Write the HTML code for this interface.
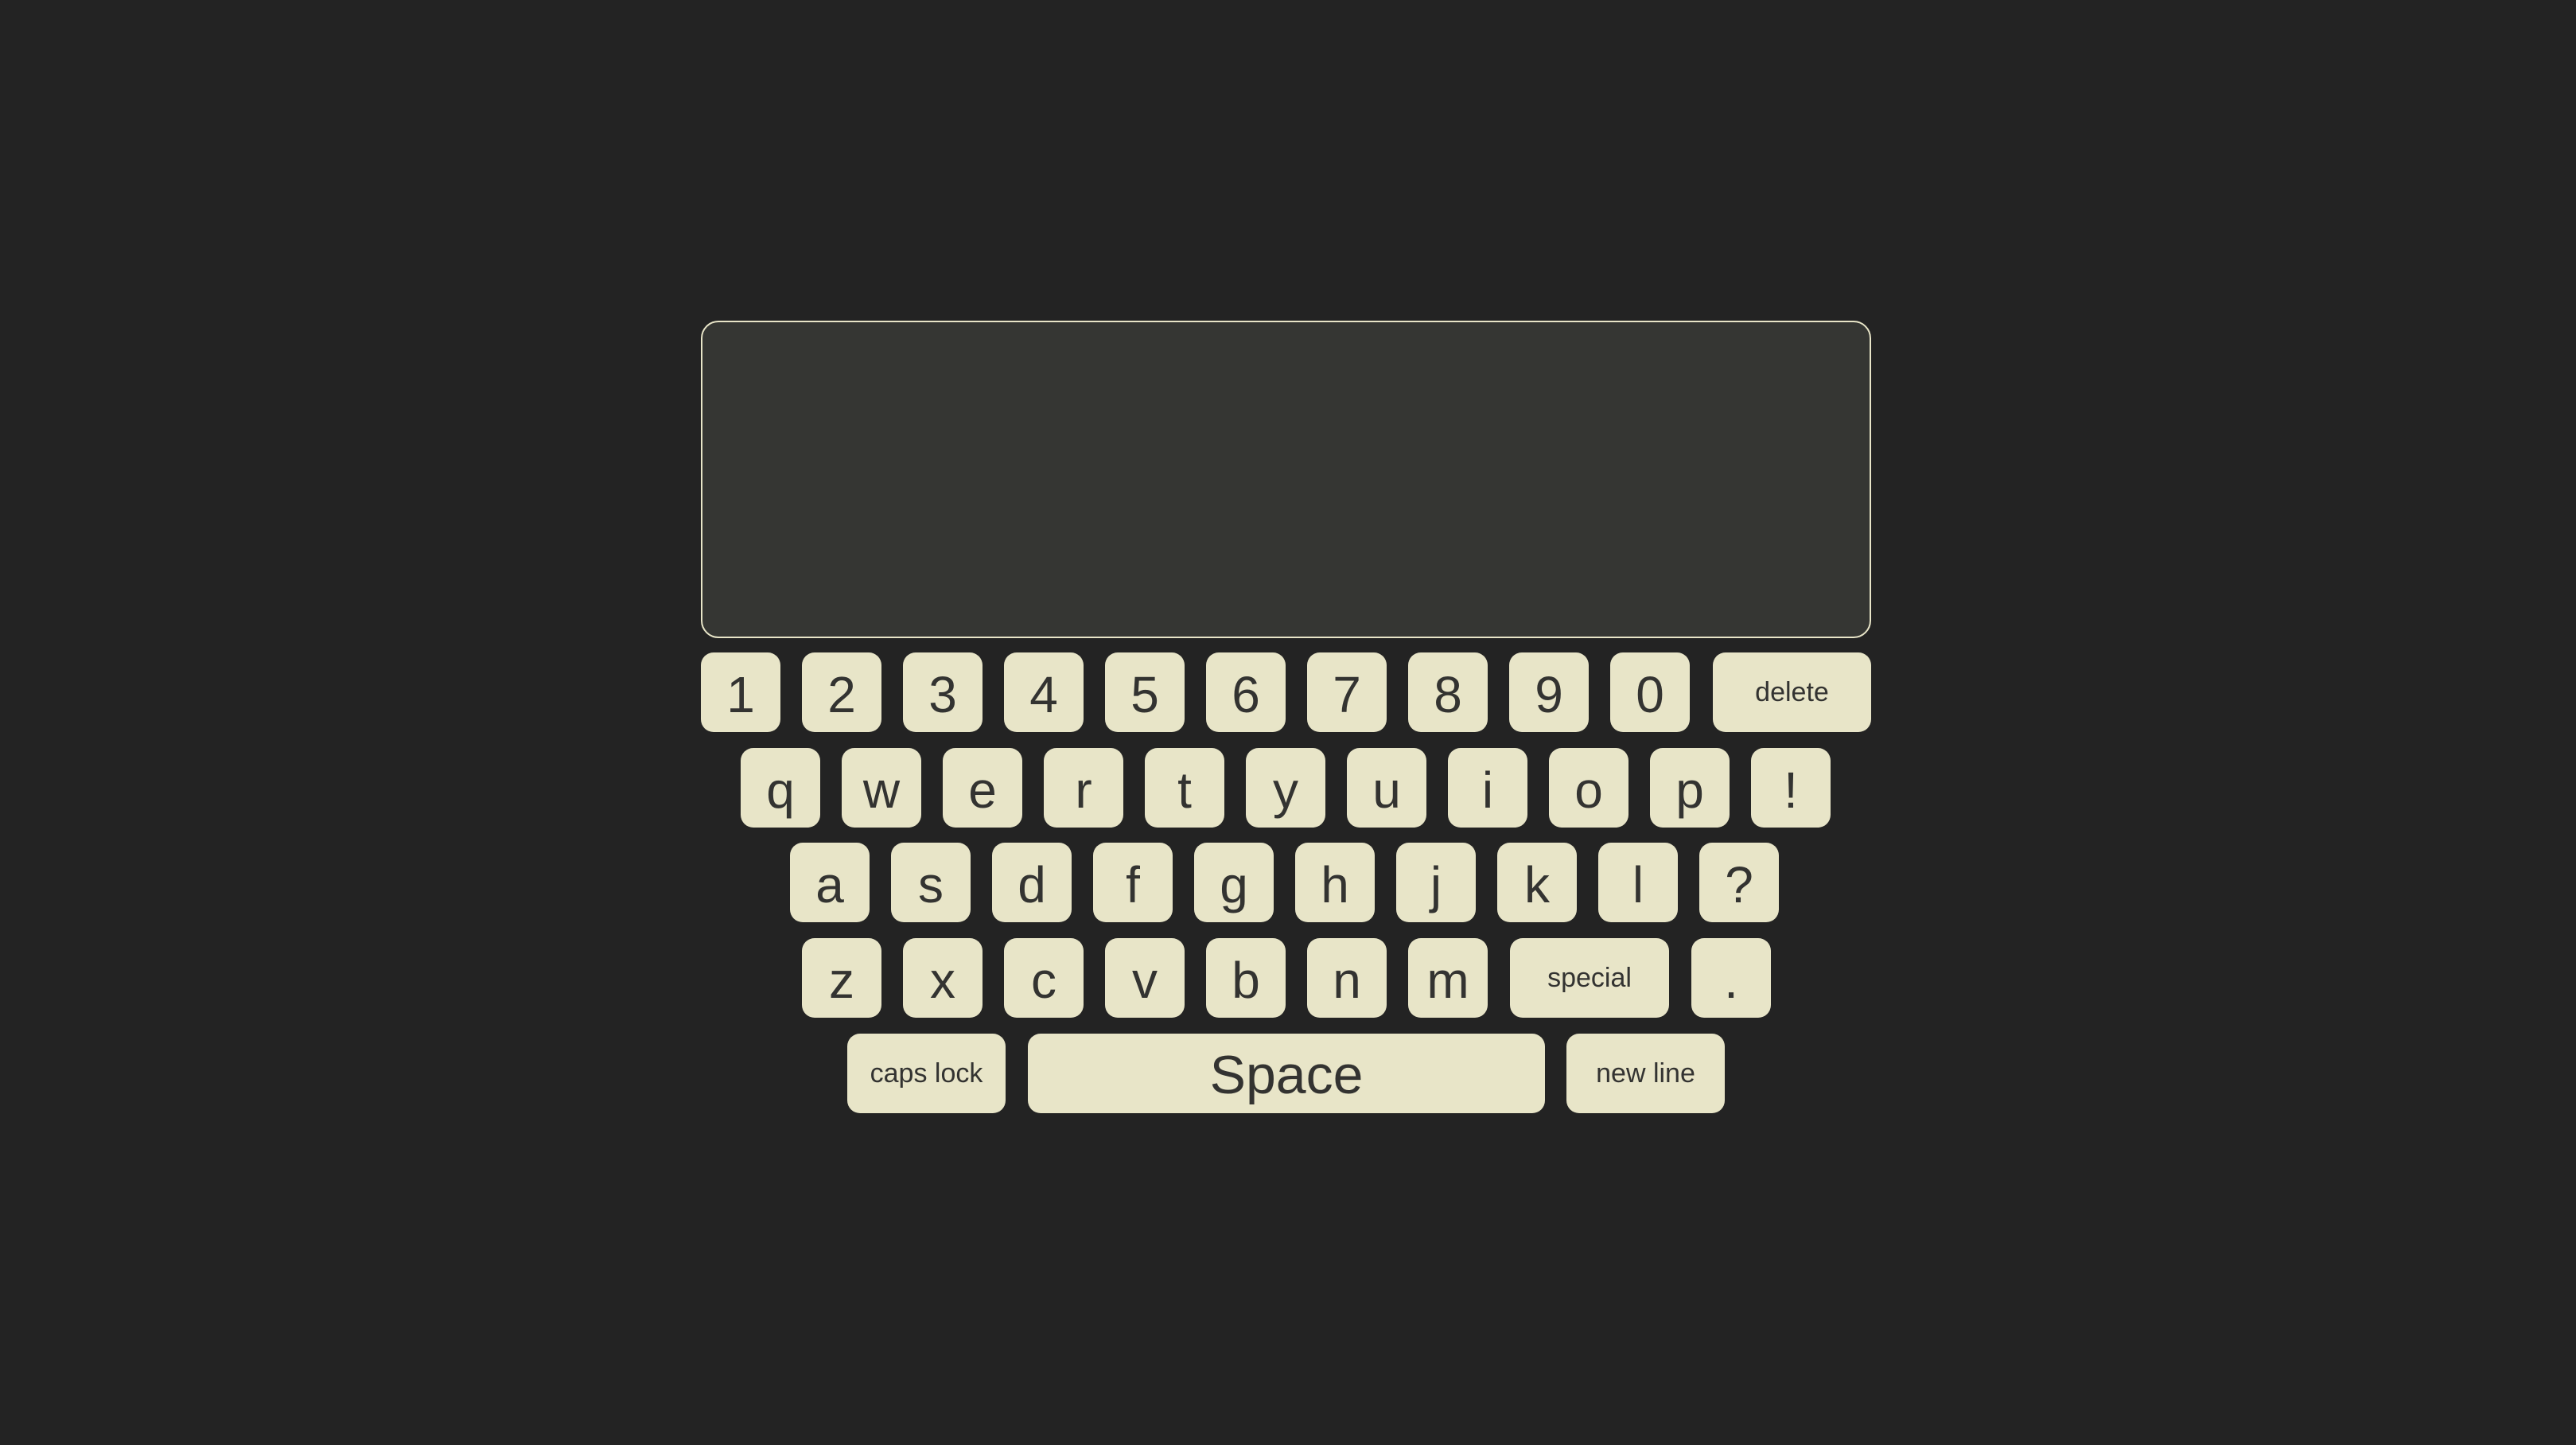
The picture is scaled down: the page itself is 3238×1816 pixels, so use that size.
<!DOCTYPE html>
<html><head><meta charset="utf-8"><style>
html,body{margin:0;padding:0;}
body{width:3238px;height:1816px;background:#232323;position:relative;overflow:hidden;font-family:"Liberation Sans","DejaVu Sans",sans-serif;}
.ta{position:absolute;left:881px;top:403px;width:1467px;height:395px;background:#353633;border:2px solid #e8e5c8;border-radius:22px;}
.k{position:absolute;width:100px;height:100px;background:#e8e5c8;border-radius:16px;color:#333331;display:flex;align-items:center;justify-content:center;font-size:64px;line-height:1;padding-top:6px;box-sizing:border-box;}
.s{font-size:34px;padding-top:0;}
.sp{font-size:68px;padding-top:4px;}
</style></head><body>
<div class="ta"></div>
<div id="kb"></div>
<script>
const kb=document.getElementById('kb');
function key(x,y,w,t,c){const d=document.createElement('div');d.className='k'+(c?' '+c:'');d.style.left=x+'px';d.style.top=y+'px';d.style.width=w+'px';d.textContent=t;kb.appendChild(d);}
const P=127;
'1234567890'.split('').forEach((c,i)=>key(881+i*P,820,100,c));
key(2153,820,199,'delete','s');
'qwertyuiop!'.split('').forEach((c,i)=>key(931+i*P,940,100,c));
'asdfghjkl?'.split('').forEach((c,i)=>key(993+i*P,1059,100,c));
'zxcvbnm'.split('').forEach((c,i)=>key(1008+i*P,1179,100,c));
key(1898,1179,200,'special','s');
key(2126,1179,100,'.');
key(1065,1299,199,'caps lock','s');
key(1292,1299,650,'Space','sp');
key(1969,1299,199,'new line','s');
</script>
</body></html>
